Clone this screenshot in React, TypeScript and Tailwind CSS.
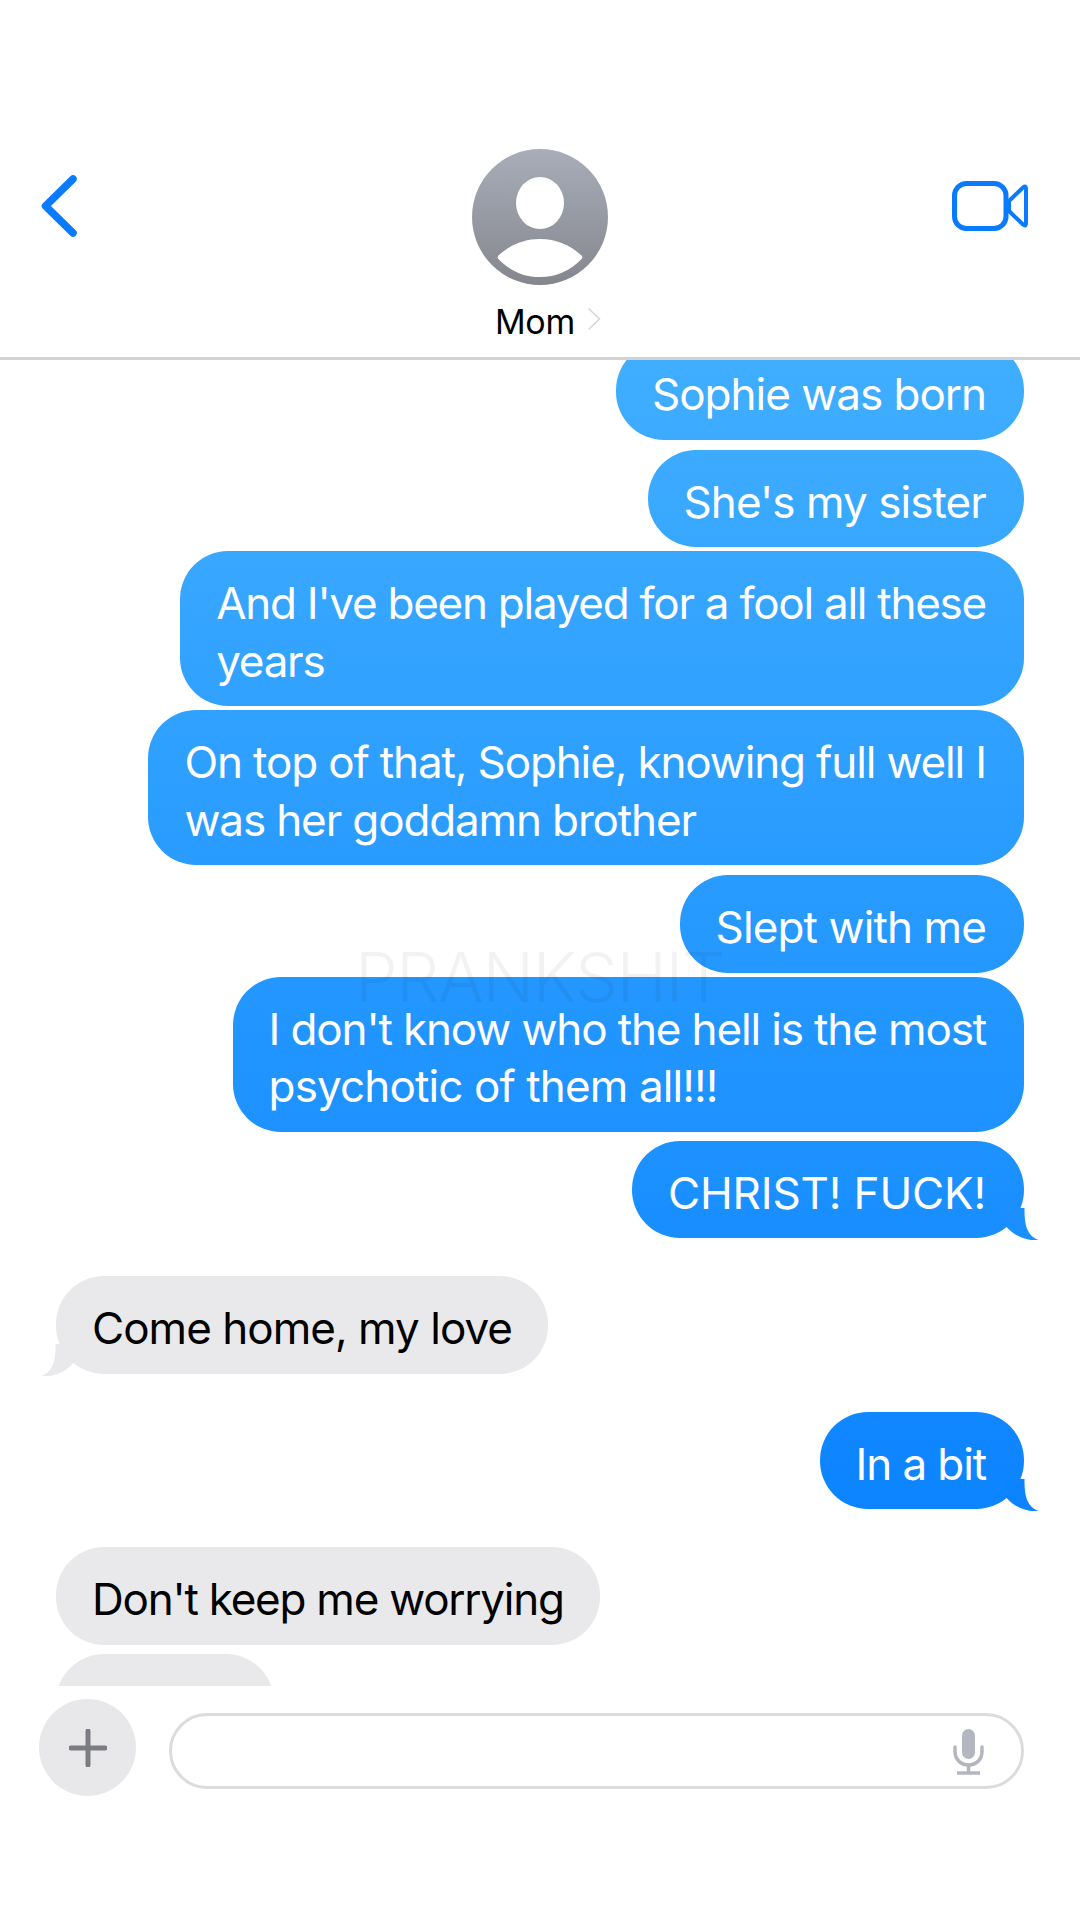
import React from "react";

const blueBg =
  "bg-[linear-gradient(180deg,#40aeff_360px,#0c84ff_1510px)] bg-fixed";

function Tail({ side, color }: { side: "left" | "right"; color: string }) {
  return (
    <svg
      viewBox="0 0 34 32"
      className={
        side === "right"
          ? "absolute right-[-15px] bottom-[-2px] w-[35px] h-[32px]"
          : "absolute left-[-15px] bottom-[-2px] w-[35px] h-[32px] -scale-x-100"
      }
    >
      <path d="M0 0 L20 0 C20 14 21 27 34 32 C26 33 13 31 2 19 Z" fill={color} />
    </svg>
  );
}

function Out({
  children,
  mt,
  tail,
  cls = "",
}: {
  children: React.ReactNode;
  mt: string;
  tail?: string;
  cls?: string;
}) {
  return (
    <div
      className={`relative self-end rounded-[48px] pl-9 pr-[38px] pt-[24px] pb-[16px] text-white ${blueBg} ${mt} ${cls}`}
    >
      {children}
      {tail && <Tail side="right" color={tail} />}
    </div>
  );
}

function In({
  children,
  mt,
  tail,
  cls = "",
}: {
  children: React.ReactNode;
  mt: string;
  tail?: boolean;
  cls?: string;
}) {
  return (
    <div
      className={`relative self-start rounded-[48px] bg-[#e9e9eb] px-9 pt-[24px] pb-[16px] text-black ${mt} ${cls}`}
    >
      {children}
      {tail && <Tail side="left" color="#e9e9eb" />}
    </div>
  );
}

export default function App() {
  return (
    <div className="relative w-[1080px] h-[1920px] bg-white overflow-hidden font-['Inter','Liberation_Sans',sans-serif] flex flex-col">
      {/* Header */}
      <header className="relative h-[360px] shrink-0 border-b-[3px] border-[#d2d2d4]">
        <div className="flex justify-between items-start pt-[175px] pl-[41px] pr-[52px]">
          <svg width="36" height="62" viewBox="0 0 36 62" className="shrink-0">
            <path
              d="M32 4 L4.500 31 L32 58"
              fill="none"
              stroke="#0a7aff"
              strokeWidth="7.500"
              strokeLinecap="round"
              strokeLinejoin="round"
            />
          </svg>
          <svg width="76" height="52" viewBox="0 0 76 52" className="mt-[5px] shrink-0">
            <rect x="2.500" y="3.500" width="51.500" height="45" rx="12" fill="none" stroke="#0a7aff" strokeWidth="5" />
            <path
              d="M57 21 L71 7.500 Q74 5 74 9 L74 43 Q74 47 71 44.500 L57 31 Z"
              fill="none"
              stroke="#0a7aff"
              strokeWidth="4"
              strokeLinejoin="round"
            />
          </svg>
        </div>
        <div className="absolute left-[472px] top-[148px] w-[136px] h-[138px]">
          <svg viewBox="0 0 136 138" className="w-full h-full">
            <defs>
              <linearGradient id="av" x1="0" y1="0" x2="0" y2="1">
                <stop offset="0" stopColor="#a8adb9" />
                <stop offset="1" stopColor="#85878e" />
              </linearGradient>
            </defs>
            <circle cx="68" cy="69" r="68" fill="url(#av)" />
            <ellipse cx="68" cy="55" rx="24" ry="26" fill="#fff" />
            <path
              d="M27 107 C38 97 52 91 68 91 C84 91 98 97 109 107 Q111.500 109 109.500 111 C98 123 84 129 68 129 C52 129 38 123 26.500 111 Q24.500 109 27 107 Z"
              fill="#fff"
            />
          </svg>
        </div>
        <div className="absolute left-[495px] top-[300px] flex items-center">
          <span className="text-[34px] leading-[44px] text-black tracking-[-0.01em]">Mom</span>
          <svg width="14" height="24" viewBox="0 0 14 24" className="ml-[12px] -mt-[6px]">
            <path d="M1.500 1.500 L12.500 12 L1.500 22.500" fill="none" stroke="#d8d8da" strokeWidth="1.600" />
          </svg>
        </div>
      </header>

      {/* Messages */}
      <main className="h-[1326px] shrink-0 overflow-hidden flex flex-col pl-[56px] pr-[56px] text-[44px] leading-[57.500px] tracking-[-0.025em]">
        <Out mt="-mt-[18px]" cls="tracking-[-0.023em]">Sophie was born</Out>
        <Out mt="mt-[10px]" cls="tracking-[-0.021em]">She's my sister</Out>
        <Out mt="mt-1" cls="tracking-[-0.0285em]">
          And I've been played for a fool all these
          <br />
          years
        </Out>
        <Out mt="mt-1" cls="tracking-[-0.0258em]">
          On top of that, Sophie, knowing full well I
          <br />
          was her goddamn brother
        </Out>
        <Out mt="mt-[10px]" cls="tracking-[-0.02em]">Slept with me</Out>
        <Out mt="mt-1" cls="tracking-[-0.0258em]">
          I don't know who the hell is the most
          <br />
          <span className="tracking-[-0.02em]">psychotic of them all!!!</span>
        </Out>
        <Out mt="mt-[9px]" tail="#1c8fff" cls="tracking-[-0.003em]">
          CHRIST! FUCK!
        </Out>
        <In mt="mt-[38px]" tail cls="tracking-[-0.022em]">
          Come home, my love
        </In>
        <Out mt="mt-[38px]" tail="#0c84ff">
          In a bit
        </Out>
        <In mt="mt-[38px]" cls="tracking-[-0.028em]">Don't keep me worrying</In>
        <In mt="mt-[9px]" cls="w-[218px] shrink-0">
          &nbsp;
        </In>
      </main>

      {/* Composer */}
      <footer className="flex items-start pt-[13px] pl-[39px] pr-[56px]">
        <div className="w-[97px] h-[97px] shrink-0 rounded-full bg-[#e8e8ea] flex items-center justify-center">
          <svg width="38" height="38" viewBox="0 0 38 38">
            <path d="M19 2 V36 M2 19 H36" stroke="#7c7d82" strokeWidth="5" strokeLinecap="round" />
          </svg>
        </div>
        <div className="ml-[33px] mt-[14px] flex-1 h-[76px] rounded-[38px] border-[3px] border-[#dcdcdf] flex items-center justify-end pr-[37px]">
          <svg width="31" height="46" viewBox="0 0 31 46" className="mt-[1px]">
            <rect x="9" y="0" width="13" height="30" rx="6.500" fill="#b4b7c0" />
            <path
              d="M2 18 V22 C2 31 8 36 15.500 36 C23 36 29 31 29 22 V18"
              fill="none"
              stroke="#b4b7c0"
              strokeWidth="3.500"
              strokeLinecap="round"
            />
            <path d="M15.500 36 V43 M4 44 H27" stroke="#b4b7c0" strokeWidth="3.500" />
          </svg>
        </div>
      </footer>

      {/* Watermark */}
      <div className="absolute left-[355px] top-[937px] text-[68px] leading-[80px] font-light tracking-[-0.02em] text-black/5 pointer-events-none">
        PRANKSHIT
      </div>
    </div>
  );
}
